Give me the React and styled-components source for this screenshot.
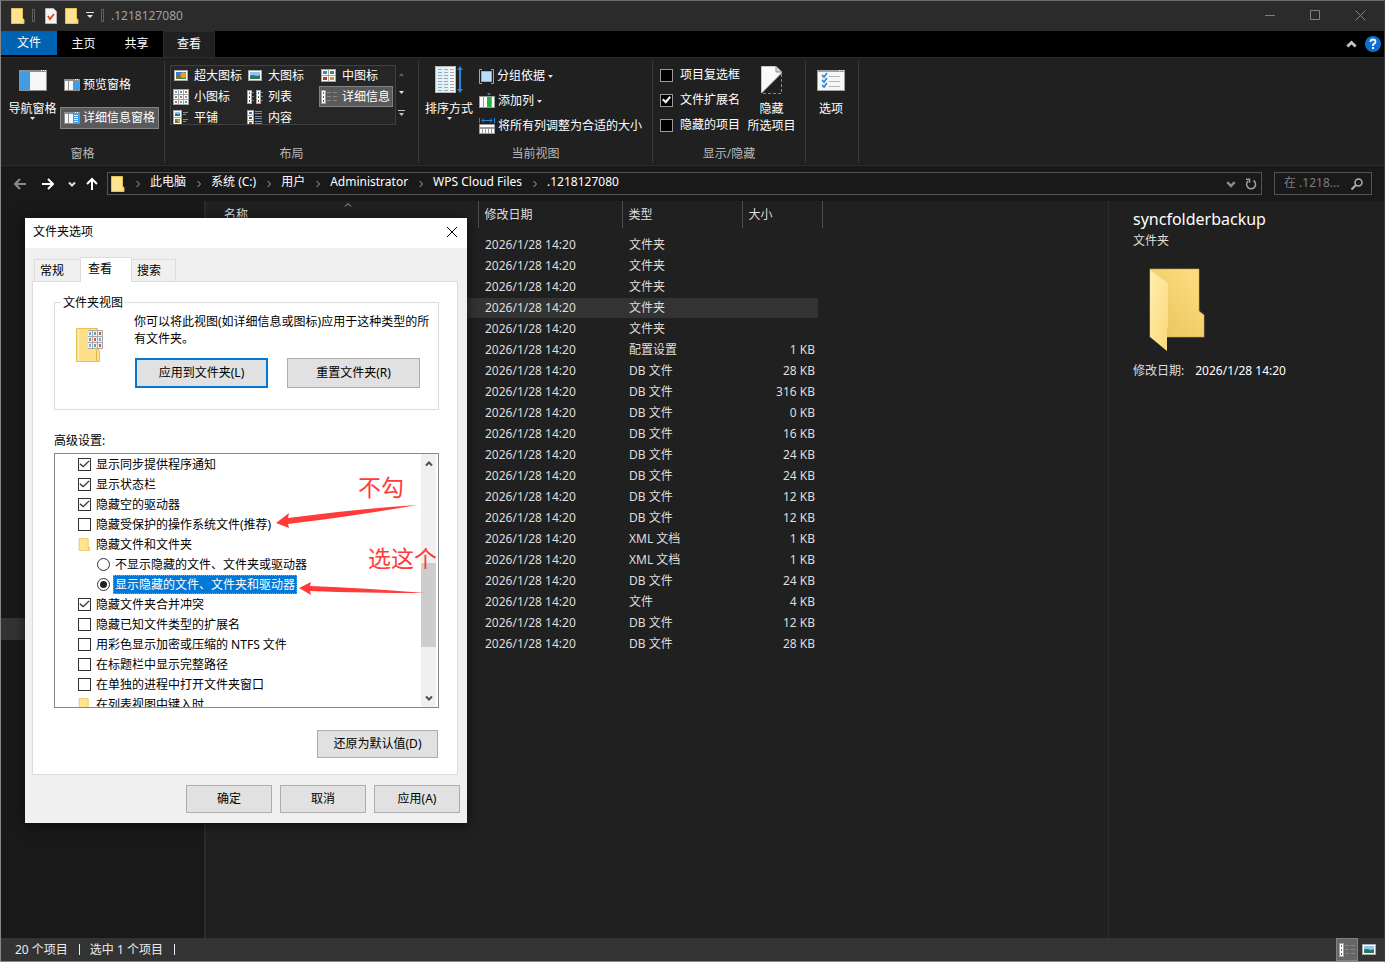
import React from "react";
import styled, { createGlobalStyle, css } from "styled-components";

const Global = createGlobalStyle`
  *, *::before, *::after { box-sizing: border-box; }
  body { margin: 0; background: #202020; }
  body, button, input, table {
    font-family: "Noto Sans", "Noto Sans CJK SC", sans-serif;
    font-size: 12px;
    line-height: 16px;
  }
  button { border: 0; padding: 0; margin: 0; background: none; color: inherit; white-space: nowrap; }
  svg { display: block; flex: none; }
`;

/* ---------- window frame ---------- */
const Window = styled.div`
  position: relative;
  display: flex;
  flex-direction: column;
  min-height: 100vh;
  border: 1px solid #868686;
  border-top-color: #6c6c6c;
  border-right-color: #3c3c3c;
  background: #202020;
  color: #fff;
  overflow: hidden;
`;
const TitleBar = styled.header`
  display: flex;
  align-items: center;
  height: 30px;
  padding-bottom: 1px;
  background: #2b2b2b;
`;
const QuickAccess = styled.div`
  display: flex;
  align-items: center;
  gap: 7px;
  padding-left: 10px;
`;
const Grip = styled.span`
  width: 3px;
  height: 13px;
  border: 1px solid #606060;
`;
const WindowTitle = styled.h1`
  margin: 0;
  font-size: 12px;
  font-weight: 400;
  color: #a0a0a0;
`;
const Controls = styled.div`
  display: flex;
  margin: 0 1px 0 auto;
`;
const ControlButton = styled.button`
  display: grid;
  place-items: center;
  width: 45px;
  height: 29px;
`;
const TabBar = styled.nav`
  display: flex;
  height: 26px;
  background: #000;
`;
const RibbonTab = styled.button`
  width: ${(p) => p.$w || 53}px;
  height: 26px;
  padding-bottom: 1px;
  ${(p) => p.$file && css`
    height: 24px;
    padding: 0;
    background: #0063b1;
  `}
  ${(p) => p.$active && css`background: #202020; border: 1px solid #2b2b2b; border-bottom: 0;`}
`;
const TabTools = styled.div`
  display: flex;
  align-items: center;
  gap: 8px;
  margin-left: auto;
  padding-right: 3px;
`;

/* ---------- ribbon ---------- */
const Ribbon = styled.section`
  display: flex;
  height: 109px;
  padding-top: 3px;
  border-top: 1px solid #2b2b2b;
  border-bottom: 1px solid #2b2b2b;
`;
const Group = styled.div`
  display: flex;
  flex-direction: column;
  width: ${(p) => p.$w}px;
  height: 102px;
  border-right: 1px solid #3a3a3a;
`;
const GroupBody = styled.div`
  display: flex;
  flex: 1;
  padding: 4px 4px 0;
`;
const GroupLabel = styled.div`
  height: 17px;
  text-align: center;
  color: #b8b8b8;
`;
const BigButton = styled.button`
  display: flex;
  flex: none;
  flex-direction: column;
  align-items: center;
  width: ${(p) => p.$w || 52}px;
  height: 78px;
  line-height: 17px;
`;
const BigIcon = styled.span`
  display: grid;
  place-items: center;
  height: 30px;
  margin: 0 0 5px;
`;
const Stack = styled.div`
  display: flex;
  flex-direction: column;
  align-items: flex-start;
  gap: ${(p) => p.$gap}px;
  padding-top: ${(p) => p.$top || 0}px;
  padding-left: ${(p) => p.$left || 0}px;
`;
const SmallButton = styled.button`
  display: flex;
  align-items: center;
  gap: 3px;
  height: ${(p) => p.$h || 22}px;
  padding: 0 3px;
  border: 1px solid ${(p) => (p.$on ? "#828282" : "transparent")};
  background: ${(p) => (p.$on ? "#5a5a5a" : "none")};
`;
const Gallery = styled.div`
  display: grid;
  grid-template-columns: 74px 74px 74px;
  grid-auto-rows: 21px;
  width: 226px;
  height: 60px;
  margin-left: 1px;
  border: 1px solid #404040;
  background: #262626;
  overflow: hidden;
`;
const GalleryItem = styled.button`
  display: flex;
  align-items: center;
  gap: 5px;
  height: 21px;
  margin-top: -1px;
  padding-left: 1px;
  border: 1px solid ${(p) => (p.$on ? "#828282" : "transparent")};
  background: ${(p) => (p.$on ? "#5a5a5a" : "none")};
`;
const GalleryScroll = styled.div`
  display: grid;
  width: 11px;
  height: 60px;
  button { display: grid; place-items: center; }
`;
const RibbonCheck = styled.label`
  display: flex;
  align-items: center;
  gap: 7px;
  height: 16px;
  white-space: nowrap;
`;
const Check = styled.input.attrs({ type: "checkbox" })`
  appearance: none;
  display: grid;
  place-items: center;
  flex: none;
  width: 13px;
  height: 13px;
  margin: 0;
  border: 1px solid ${(p) => (p.$dark ? "#9a9a9a" : "#333")};
  background: ${(p) => (p.$dark ? "#000" : "#fff")};
  &:checked::after {
    content: "";
    width: ${(p) => (p.$dark ? 9 : 11)}px;
    height: ${(p) => (p.$dark ? 9 : 10)}px;
    background: ${(p) => (p.$dark ? "#f0f0f0" : "#333")};
    clip-path: ${(p) => p.$dark
      ? "polygon(0 50%, 16% 34%, 40% 56%, 84% 6%, 100% 22%, 42% 92%)"
      : "polygon(4% 52%, 12% 43%, 38% 68%, 88% 14%, 97% 23%, 38% 86%)"};
  }
`;
const Radio = styled.input.attrs({ type: "radio" })`
  appearance: none;
  display: grid;
  place-items: center;
  flex: none;
  width: 13px;
  height: 13px;
  margin: 0;
  border: 1px solid #333;
  border-radius: 50%;
  &:checked::after {
    content: "";
    width: 7px;
    height: 7px;
    border-radius: 50%;
    background: #222;
  }
`;

/* ---------- address row ---------- */
const AddressRow = styled.div`
  display: flex;
  align-items: center;
  height: 35px;
  padding-right: 12px;
  background: #191919;
`;
const NavButtons = styled.div`
  display: flex;
  align-items: center;
  width: 106px;
  padding-left: 11px;
  button { display: grid; place-items: center; }
`;
const NavButton = styled.button`
  width: ${(p) => p.$w}px;
  height: 22px;
`;
const AddressBox = styled.nav`
  display: flex;
  align-items: center;
  flex: 1;
  height: 23px;
  padding-left: 3px;
  border: 1px solid #535353;
`;
const Crumb = styled.button`
  padding-bottom: 3px;
`;
const Sep = styled.span`
  display: grid;
  place-items: center;
  width: 25px;
`;
const AddressTools = styled.div`
  display: flex;
  align-items: center;
  margin-left: auto;
  button { display: grid; place-items: center; width: 20px; height: 21px; }
`;
const SearchBox = styled.label`
  display: flex;
  align-items: center;
  width: 98px;
  height: 23px;
  margin-left: 12px;
  padding: 0 8px 0 9px;
  border: 1px solid #535353;
`;
const SearchInput = styled.input`
  flex: 1;
  min-width: 0;
  padding: 0 0 2px;
  border: 0;
  background: none;
  color: #fff;
  &::placeholder { color: #7c7c7c; opacity: 1; }
`;

/* ---------- content ---------- */
const Content = styled.main`
  display: flex;
  flex: 1;
`;
const Tree = styled.aside`
  width: 205px;
  padding-top: 417px;
  border-right: 2px solid #2b2b2b;
  background: #191919;
`;
const TreeRow = styled.div`
  height: 22px;
  background: #333;
`;
const Files = styled.section`
  flex: 1;
  min-width: 0;
`;
const Table = styled.table`
  table-layout: fixed;
  width: 616px;
  border-collapse: collapse;
  color: #dedede;
  th, td { padding: 0; font-weight: 400; text-align: left; }
`;
const HeadCell = styled.th`
  height: 27px;
  border-right: 1px solid #4e4e4e;
`;
const HeadInner = styled.button`
  display: grid;
  width: 100%;
  height: 27px;
  padding-left: ${(p) => p.$left || 6}px;
  text-align: left;
  align-items: center;
  > * { grid-area: 1 / 1; }
  svg { align-self: start; justify-self: center; }
`;
const SortMark = styled.span`
  justify-self: center;
  align-self: start;
  padding-right: 6px;
`;
const Row = styled.tr`
  height: 21px;
  background: linear-gradient(${(p) => (p.$on ? "#333, #333" : "transparent, transparent")}) 0 1px / 612px 20px no-repeat;
`;
const Cell = styled.td`
  && { padding-left: 7px; }
  && { ${(p) => p.$right && css`text-align: right; padding-right: 7px;`} }
`;
const Details = styled.aside`
  width: 276px;
  padding: 6px 0 0 24px;
  border-left: 1px solid #2e2e2e;
`;
const DetailsTitle = styled.h2`
  margin: 0;
  font-size: 16px;
  font-weight: 400;
  line-height: 24px;
`;
const DetailsType = styled.p`
  margin: 2px 0 19px;
  color: #dedede;
`;
const DetailsMeta = styled.p`
  display: flex;
  gap: 11px;
  margin: 11px 0 0;
  span { color: #dedede; }
`;
const StatusBar = styled.footer`
  display: flex;
  align-items: center;
  height: 23px;
  padding-left: 14px;
  background: #333;
  color: #ececec;
`;
const StatusDivider = styled.span`
  width: 1px;
  height: 11px;
  margin: 0 10px 0 11px;
  background: #ececec;
`;
const ViewSwitch = styled.div`
  display: flex;
  margin-left: auto;
  margin-right: 4px;
`;
const ViewButton = styled.button`
  display: grid;
  place-items: center;
  width: 22px;
  height: 23px;
  border: 1px solid ${(p) => (p.$on ? "#828282" : "transparent")};
  background: ${(p) => (p.$on ? "#666" : "none")};
`;

/* ---------- dialog ---------- */
const Dialog = styled.section`
  position: absolute;
  left: 24px;
  top: 217px;
  width: 442px;
  background: #f0f0f0;
  color: #000;
  box-shadow: 0 2px 12px rgba(0, 0, 0, 0.6);
`;
const DialogTitle = styled.header`
  display: flex;
  align-items: center;
  justify-content: space-between;
  height: 30px;
  padding: 0 9px 2px 8px;
  background: #fff;
`;
const DialogTabs = styled.div`
  display: flex;
  align-items: flex-end;
  height: 33px;
  padding-left: 9px;
`;
const DialogTab = styled.button`
  width: ${(p) => p.$w}px;
  height: 22px;
  padding-left: 5px;
  border: 1px solid #dcdcdc;
  border-bottom: 0;
  text-align: left;
  ${(p) => p.$on && css`
    position: relative;
    height: 25px;
    margin: 0 -1px -1px;
    padding: 0 0 3px 7px;
    background: #fff;
  `}
`;
const Panel = styled.div`
  display: flex;
  flex-direction: column;
  margin: 0 9px 0 7px;
  padding: 12px 18px 16px 21px;
  border: 1px solid #dcdcdc;
  background: #fff;
`;
const Fieldset = styled.fieldset`
  height: 116px;
  margin: 0;
  padding: 0;
  border: 1px solid #dcdcdc;
  legend { height: 16px; margin-left: 6px; padding: 1px 2px 0; }
`;
const FieldBody = styled.div`
  display: flex;
  padding-top: 3px;
  > svg { margin: 14px 30px 0 21px; }
`;
const FieldText = styled.p`
  margin: 0 0 11px;
  line-height: 17px;
`;
const Buttons = styled.div`
  display: flex;
  gap: ${(p) => p.$gap}px;
  padding-left: 1px;
  ${(p) => p.$footer && css`justify-content: flex-end; padding: 10px 7px;`}
`;
const PushButton = styled.button`
  width: ${(p) => p.$w || 86}px;
  height: ${(p) => p.$h || 28}px;
  border: ${(p) => (p.$primary ? "2px solid #0078d7" : "1px solid #adadad")};
  background: #e1e1e1;
`;
const ListLabel = styled.div`
  margin: 23px 0 4px;
`;
const ListBox = styled.div`
  display: flex;
  height: 255px;
  padding-right: 2px;
  border: 1px solid #828790;
`;
const Options = styled.div`
  flex: 1;
  overflow: hidden;
  padding-left: 23px;
`;
const Option = styled.label`
  display: flex;
  align-items: center;
  gap: ${(p) => (p.$nested ? 3 : 5)}px;
  height: 20px;
  padding-left: ${(p) => (p.$nested ? 19 : 0)}px;
  white-space: nowrap;
`;
const OptionText = styled.span`
  padding: 2px 2px 1px;
  margin-left: ${(p) => (p.$nested ? 0 : -2)}px;
  ${(p) => p.$on && css`
    background: #0078d7;
    color: #fff;
    outline: 1px dotted #ff8728;
    outline-offset: -1px;
  `}
`;
const ScrollBar = styled.div`
  display: flex;
  flex-direction: column;
  align-items: center;
  width: 15px;
  padding: 6px 0 5px;
  background: #f0f0f0;
`;
const Thumb = styled.div`
  width: 15px;
  height: 84px;
  margin: 95px 0 auto;
  background: #cdcdcd;
`;
const Restore = styled(PushButton)`
  align-self: flex-end;
  margin: 22px 1px 0 0;
`;
const Note = styled.span`
  position: absolute;
  left: ${(p) => p.$x}px;
  top: ${(p) => p.$y}px;
  font-size: 23px;
  line-height: 28px;
  color: #ff3b3b;
  white-space: nowrap;
`;
const Arrows = styled.svg`
  position: absolute;
  left: 250px;
  top: 282px;
  pointer-events: none;
`;

/* ---------- drawings ---------- */
const Folder = ({ w = 14, h = 16 }) => (
  <svg width={w} height={h} viewBox="0 0 14 16">
    <path d="M.5.5h11v10l1.500 1v4H.5z" fill="#ffe391" stroke="#e9c04c" />
    <path d="M11.500 10.500v5h1.500v-4.500z" fill="#f5cf5f" />
  </svg>
);
const Chevron = ({ d = "right", c = "#8a8a8a", s = 8, w = 2 }) => {
  const paths = { right: "M2.500 1l3 3-3 3", down: "M1 2.500l3 3 3-3", up: "M1 5.500l3-3 3 3" };
  return (
    <svg width={s} height={s} viewBox="0 0 8 8" fill="none" stroke={c} strokeWidth={w}>
      <path d={paths[d]} />
    </svg>
  );
};
const Tri = ({ up, c = "#e0e0e0" }) => (
  <svg width="5" height="3" viewBox="0 0 5 3"><path d={up ? "M0 3L2.500 0 5 3z" : "M0 0h5L2.500 3z"} fill={c} /></svg>
);
const NavPaneIcon = () => (
  <svg width="28" height="21" viewBox="0 0 28 21">
    <rect width="28" height="21" fill="#8e8e8e" />
    <path d="M1 2h10v18H1z" fill="#429ce3" />
    <path d="M11 2h16v18H11z" fill="#f7f7f7" />
    <path d="M22 .5h1M24 .5h1M26 .5h1" stroke="#fff" />
  </svg>
);
const SmallPaneIcon = ({ lines }) => (
  <svg width="16" height="12" viewBox="0 0 16 12">
    <rect width="16" height="12" fill="#8e8e8e" />
    <path d="M1 2h3v9H1zM5 2h4v9H5z" fill="#f7f7f7" />
    <path d="M9 2h6v9H9z" fill="#429ce3" />
    {lines && <path d="M10 3.500h4M10 5.500h4M10 7.500h4M10 9.500h4" stroke="#d9edff" />}
    <path d="M11 .5h1M13 .5h1" stroke="#fff" />
  </svg>
);
const Photo = ({ x = 0, y = 0, w = 10, h = 6, warm }) => (
  <g transform={`translate(${x} ${y})`}>
    <rect width={w} height={h} fill={warm ? "#3b78d8" : "#8cc4f5"} />
    <path d={`M0 ${h * 0.5}q${w * 0.3}-1 ${w * 0.5} 0t${w * 0.5}-.5V${h}H0z`} fill={warm ? "#3f9040" : "#2f7360"} />
    {warm && <circle cx={w * 0.72} cy={h * 0.45} r={h * 0.4} fill="#e7a11a" />}
    {warm && <circle cx={w * 0.28} cy={h * 0.7} r={h * 0.25} fill="#d8452c" />}
  </g>
);
const ViewIcon = ({ kind }) => {
  const cols = ["#2d7ad1", "#1f7a4f", "#c4302b"];
  return (
    <svg width="16" height="16" viewBox="0 0 16 16">
      {(kind === "xl" || kind === "large") && (
        <g><rect x="1" y="2" width="14" height="11" fill="#a8a8a8" /><rect x="2" y="3" width="12" height="9" fill="#fff" /><Photo x={3} y={4} w={10} h={7} warm={kind === "xl"} /></g>
      )}
      {kind === "medium" && (
        <g><rect y="1" width="15" height="13" fill="#a4a4a4" />
          {[[1, 2], [8, 2], [1, 8], [8, 8]].map(([x, y], i) => (
            <g key={i}><rect x={x} y={y} width="6" height="5" fill="#fff" /><rect x={x + 1} y={y + 1} width="4" height="3" fill={["#3c86c8", "#3f8f62", "#c9302c", "#d99722"][i]} /></g>
          ))}</g>
      )}
      {kind === "small" && (
        <g><rect width="16" height="16" fill="#a4a4a4" />{[0, 1, 2].map((r) => [0, 1, 2].map((c) => (
          <g key={`${r}${c}`}><rect x={c * 5 + 1} y={r * 5 + 1} width="4" height="4" fill="#fff" /><rect x={c * 5 + 2} y={r * 5 + 2} width="2" height="2" fill={cols[(r + c) % 3]} fillOpacity=".75" /></g>
        )))}</g>
      )}
      {kind === "list" && (
        <g>{[0, 9].map((x) => (
          <g key={x}><rect x={x} y="1" width="5" height="14" fill="#a4a4a4" />{[2, 6, 10].map((y, i) => (
            <g key={y}><rect x={x + 1} y={y} width="3" height="4" fill="#fff" /><rect x={x + 2} y={y + 1} width="1" height="2" fill={cols[i]} /><path d={`M${x + 5} ${y + 1}.5h2`} stroke="#777" /></g>
          ))}</g>
        ))}</g>
      )}
      {kind === "details" && (
        <g><rect y="1" width="5" height="14" fill="#a4a4a4" />{[2, 6, 10].map((y, i) => (
          <g key={y}><rect x="1" y={y} width="3" height="4" fill="#fff" /><rect x="2" y={y + 1} width="1" height="2" fill={cols[i]} /><path d={`M6 ${y + 1}.5h4M12 ${y + 1}.5h4`} stroke="#858585" /></g>
        ))}</g>
      )}
      {kind === "tiles" && (
        <g>{[0, 7].map((y) => (
          <g key={y}><rect y={y} width="9" height="8" fill="#a4a4a4" /><rect x="1" y={y + 1} width="7" height="6" fill="#fff" /><Photo x={2} y={y + 2} w={5} h={4} warm={y > 0} /><path d={`M10 ${y + 2}.5h5M10 ${y + 4}.5h3`} stroke="#8a8a8a" /></g>
        ))}</g>
      )}
      {kind === "content" && (
        <g><rect width="7" height="16" fill="#a4a4a4" />{[1, 6, 11].map((y, i) => (
          <g key={y}><rect x="1" y={y} width="5" height="4" fill="#fff" /><rect x="2" y={y + 1} width="3" height="2" fill={cols[i]} /><path d={`M8 ${y}.5h7`} stroke="#8a8a8a" /><path d={`M8 ${y + 2}.5h7`} stroke="#5b93e8" /></g>
        ))}</g>
      )}
    </svg>
  );
};
const SortIcon = () => (
  <svg width="28" height="28" viewBox="0 0 28 28">
    <rect width="21" height="27" fill="#b9b9b9" />
    <rect x="1" y="1" width="19" height="25" fill="#f7f7f7" />
    <path d="M1 1h13v25H1z" fill="#dff1fb" />
    <path d="M3 3.500h16M3 6.500h16M3 9.500h16M3 12.500h16M3 15.500h16M3 18.500h16M3 21.500h16M3 24.500h16" stroke="#a2abb0" strokeDasharray="4 2" />
    <path d="M25 3v21" stroke="#2a86d2" strokeWidth="2" />
    <path d="M22 4l3-4 3 4zM22 23l3 4 3-4z" fill="#2a86d2" />
  </svg>
);
const GroupByIcon = () => (
  <svg width="15" height="15" viewBox="0 0 15 15">
    <path d="M3 .5H.5v14H3M12 .5h2.500v14H12" fill="none" stroke="#a8a8a8" />
    <rect x="2.500" y="2.500" width="10" height="10" fill="#b5dffb" stroke="#6fb9ea" />
  </svg>
);
const AddColumnIcon = () => (
  <svg width="16" height="16" viewBox="0 0 16 16">
    <path d="M8 0h4L10 2.500z" fill="#2a86d2" />
    <rect y="3" width="16" height="12" fill="#989898" />
    <path d="M1 4h3v10H1zM5 4h3v10H5zM13 4h2v10h-2z" fill="#fff" />
    <path d="M8 4h4v10H8z" fill="#24b43c" />
  </svg>
);
const FitIcon = () => (
  <svg width="16" height="16" viewBox="0 0 16 16">
    <path d="M.5 0v5M15.500 0v5M3 2.500h10M5 .5L3 2.500l2 2M11 .5l2 2-2 2" fill="none" stroke="#2a86d2" />
    <path d="M0 6h16v10H0z" fill="#9c9c9c" />
    <path d="M1 7h14v2H1zM1 11h2v4H1zM4 11h2v4H4zM7 11h2v4H7zM10 11h2v4h-2zM13 11h2v4h-2z" fill="#fff" />
  </svg>
);
const HideIcon = () => (
  <svg width="22" height="28" viewBox="0 0 22 28">
    <path d="M.5.500H15L20.500 6v1L.5 27z" fill="#fafafa" stroke="#c8c8c8" />
    <path d="M15 .5V6h5.500" fill="#d8d8d8" stroke="#8c8c8c" />
    <path d="M20.500 8v19.500H1" fill="none" stroke="#429ce3" strokeDasharray="3 2" />
  </svg>
);
const OptionsIcon = () => (
  <svg width="28" height="21" viewBox="0 0 28 21">
    <rect width="28" height="21" fill="#a0a0a0" />
    <path d="M1 2h26v18H1z" fill="#f7f7f7" />
    <path d="M22 .5h1M24 .5h1M26 .5h1" stroke="#fff" />
    {[5, 10, 15].map((y) => (
      <g key={y}><rect x="5" y={y - 1} width="4" height="4" fill="#d4e9f8" /><path d={`M5 ${y}l2 2 3-4`} fill="none" stroke="#2a86d2" strokeWidth="1.500" /><path d={`M12 ${y + 1}.5h11`} stroke="#b4b4b4" /></g>
    ))}
  </svg>
);
const BigFolder = () => (
  <svg width="88" height="84" viewBox="0 0 88 84">
    <defs>
      <linearGradient id="back" x1="0" y1="1" x2="1" y2="0"><stop offset="0" stopColor="#e8c15a" /><stop offset="1" stopColor="#ffe083" /></linearGradient>
      <linearGradient id="flap" x1="0" y1="0" x2="1" y2="1"><stop offset="0" stopColor="#ffedb0" /><stop offset="1" stopColor="#fbd978" /></linearGradient>
    </defs>
    <path d="M17 1h49v42l5 4v22H17z" fill="url(#back)" stroke="#c9a850" strokeWidth=".6" />
    <path d="M17 2l18 13v43l-1 3v22L17 69z" fill="url(#flap)" />
  </svg>
);
const ViewFolder = () => (
  <svg width="28" height="36" viewBox="0 0 28 36">
    <path d="M.5 1.500h21v20l2 2v11H.5z" fill="#ffe08a" stroke="#e9c04c" />
    <path d="M2.500 2v32" stroke="#fff0bc" />
    <path d="M20.500 34V23l1.500-1" stroke="#e0b540" fill="none" />
    <rect x="12" y="3" width="15" height="19" fill="#a8a8a8" />
    {[0, 1, 2].map((r) => [0, 1, 2].map((c) => (
      <g key={`${r}${c}`}><rect x={c * 5 + 12} y={r * 6 + 4} width="4" height="5" fill="#f2f2f2" /><rect x={c * 5 + 13} y={r * 6 + 5} width="2" height="3" fill={["#5b93c8", "#4e8a7a", "#c4302b"][(c + (r === 1 ? 1 : 0)) % 3]} fillOpacity=".8" /></g>
    )))}
  </svg>
);
const Arrow = ({ d }) => (
  <svg width="14" height="14" viewBox="0 0 14 14" fill="none" stroke={d === "back" ? "#8a8a8a" : "#fff"} strokeWidth="2">
    <path d={d === "up" ? "M7 13V2M2 7l5-5 5 5" : d === "back" ? "M13 7H2M7 2L2 7l5 5" : "M1 7h11M7 2l5 5-5 5"} />
  </svg>
);

/* ---------- data ---------- */
const views = [
  ["xl", "超大图标"], ["large", "大图标"], ["medium", "中图标"],
  ["small", "小图标"], ["list", "列表"], ["details", "详细信息"],
  ["tiles", "平铺"], ["content", "内容"],
];
const files = [
  ...Array(5).fill(["文件夹", ""]),
  ["配置设置", "1 KB"],
  ["DB 文件", "28 KB"], ["DB 文件", "316 KB"], ["DB 文件", "0 KB"], ["DB 文件", "16 KB"],
  ["DB 文件", "24 KB"], ["DB 文件", "24 KB"], ["DB 文件", "12 KB"], ["DB 文件", "12 KB"],
  ["XML 文档", "1 KB"], ["XML 文档", "1 KB"], ["DB 文件", "24 KB"], ["文件", "4 KB"],
  ["DB 文件", "12 KB"], ["DB 文件", "28 KB"],
];
const options = [
  { t: "显示同步提供程序通知", on: true },
  { t: "显示状态栏", on: true },
  { t: "隐藏空的驱动器", on: true },
  { t: "隐藏受保护的操作系统文件(推荐)" },
  { t: "隐藏文件和文件夹", kind: "folder" },
  { t: "不显示隐藏的文件、文件夹或驱动器", kind: "radio" },
  { t: "显示隐藏的文件、文件夹和驱动器", kind: "radio", on: true },
  { t: "隐藏文件夹合并冲突", on: true },
  { t: "隐藏已知文件类型的扩展名" },
  { t: "用彩色显示加密或压缩的 NTFS 文件" },
  { t: "在标题栏中显示完整路径" },
  { t: "在单独的进程中打开文件夹窗口" },
  { t: "在列表视图中键入时", kind: "folder" },
];
const crumbs = ["此电脑", "系统 (C:)", "用户", "Administrator", "WPS Cloud Files", ".1218127080"];

function OptionRow({ t, on, kind }) {
  const nested = kind === "radio";
  return (
    <Option as={kind === "folder" ? "div" : "label"} $nested={nested}>
      {kind === "folder" ? <Folder w={13} h={13} /> : nested ? <Radio name="hidden-files" defaultChecked={on} /> : <Check defaultChecked={on} />}
      <OptionText $nested={nested} $on={nested && on}>{t}</OptionText>
    </Option>
  );
}

function FolderOptions() {
  return (
    <Dialog role="dialog" aria-label="文件夹选项">
      <DialogTitle>
        文件夹选项
        <button aria-label="关闭">
          <svg width="12" height="12" viewBox="0 0 12 12" stroke="#000"><path d="M1 1l10 10M11 1L1 11" /></svg>
        </button>
      </DialogTitle>
      <DialogTabs role="tablist">
        <DialogTab role="tab" $w={47}>常规</DialogTab>
        <DialogTab role="tab" aria-selected="true" $w={52} $on>查看</DialogTab>
        <DialogTab role="tab" $w={45}>搜索</DialogTab>
      </DialogTabs>
      <Panel>
        <Fieldset>
          <legend>文件夹视图</legend>
          <FieldBody>
            <ViewFolder />
            <div>
              <FieldText>你可以将此视图(如详细信息或图标)应用于这种类型的所有文件夹。</FieldText>
              <Buttons $gap={19}>
                <PushButton $w={133} $h={30} $primary>应用到文件夹(L)</PushButton>
                <PushButton $w={133} $h={30}>重置文件夹(R)</PushButton>
              </Buttons>
            </div>
          </FieldBody>
        </Fieldset>
        <ListLabel>高级设置:</ListLabel>
        <ListBox>
          <Options>{options.map((o) => <OptionRow key={o.t} {...o} />)}</Options>
          <ScrollBar>
            <Chevron d="up" c="#505050" />
            <Thumb />
            <Chevron d="down" c="#505050" />
          </ScrollBar>
        </ListBox>
        <Restore $w={121}>还原为默认值(D)</Restore>
      </Panel>
      <Buttons $gap={8} $footer>
        <PushButton>确定</PushButton>
        <PushButton>取消</PushButton>
        <PushButton>应用(A)</PushButton>
      </Buttons>
      <Note $x={333} $y={255}>不勾</Note>
      <Note $x={343} $y={326}>选这个</Note>
      <Arrows width="152" height="98" viewBox="0 0 152 98" fill="#ff3b3b">
        <path d="M1 23L14 13 13 18Q80 9 142 5Q80 16 13 24L14 28z" />
        <path d="M24 88L36 82 35 86Q90 88 150 93Q90 93 35 91L36 95z" />
      </Arrows>
    </Dialog>
  );
}

export default function App() {
  return (
    <Window>
      <Global />
      <TitleBar>
        <QuickAccess>
          <Folder /><Grip />
          <svg width="16" height="16" viewBox="0 0 16 16">
            <path d="M3.500.500h8l3 3v12h-11z" fill="#f4f4f4" stroke="#b8b8b8" />
            <path d="M6 8l2 3 4-5" fill="none" stroke="#e2501e" strokeWidth="2" />
          </svg>
          <Folder />
          <svg width="8" height="7" viewBox="0 0 8 7"><path d="M0 0h8v1H0zM1 3h6L4 6z" fill="#e6e6e6" /></svg>
          <Grip />
          <WindowTitle>.1218127080</WindowTitle>
        </QuickAccess>
        <Controls>
          <ControlButton aria-label="最小化"><svg width="11" height="11" stroke="#808080"><path d="M0 5.500h10" /></svg></ControlButton>
          <ControlButton aria-label="最大化"><svg width="11" height="11" stroke="#808080" fill="none"><path d="M.5.500h9v9h-9z" /></svg></ControlButton>
          <ControlButton aria-label="关闭"><svg width="11" height="11" stroke="#808080"><path d="M.5.500l10 10M10.500.500l-10 10" /></svg></ControlButton>
        </Controls>
      </TitleBar>
      <TabBar>
        <RibbonTab $w={56} $file>文件</RibbonTab>
        <RibbonTab>主页</RibbonTab>
        <RibbonTab>共享</RibbonTab>
        <RibbonTab $w={52} $active>查看</RibbonTab>
        <TabTools>
          <button aria-label="折叠功能区"><Chevron d="up" c="#c4c4c4" s={11} /></button>
          <button aria-label="帮助">
            <svg width="16" height="16" viewBox="0 0 16 16">
              <circle cx="8" cy="8" r="8" fill="#0c6fd1" />
              <path d="M5.500 6q0-2.500 2.500-2.500T10.500 6Q10.500 7.200 8 8.500V10" fill="none" stroke="#fff" strokeWidth="1.800" />
              <rect x="7" y="11" width="2" height="2" fill="#fff" />
            </svg>
          </button>
        </TabTools>
      </TabBar>
      <Ribbon>
        <Group $w={164}>
          <GroupBody>
            <BigButton $w={55}><BigIcon><NavPaneIcon /></BigIcon>导航窗格<Tri /></BigButton>
            <Stack $gap={11} $top={9}>
              <SmallButton><SmallPaneIcon />预览窗格</SmallButton>
              <SmallButton $on><SmallPaneIcon lines />详细信息窗格</SmallButton>
            </Stack>
          </GroupBody>
          <GroupLabel>窗格</GroupLabel>
        </Group>
        <Group $w={254}>
          <GroupBody>
            <Gallery>
              {views.map(([k, t]) => (
                <GalleryItem key={k} $on={k === "details"}><ViewIcon kind={k} />{t}</GalleryItem>
              ))}
            </Gallery>
            <GalleryScroll>
              <button aria-label="上"><Tri up c="#5e5e5e" /></button>
              <button aria-label="下"><Tri /></button>
              <button aria-label="更多"><svg width="7" height="7"><path d="M0 0h7v1H0zM1 3h5L3.500 6z" fill="#c8c8c8" /></svg></button>
            </GalleryScroll>
          </GroupBody>
          <GroupLabel>布局</GroupLabel>
        </Group>
        <Group $w={234}>
          <GroupBody>
            <BigButton><BigIcon><SortIcon /></BigIcon>排序方式<Tri /></BigButton>
            <Stack $gap={3}>
              <SmallButton><GroupByIcon />分组依据<Tri /></SmallButton>
              <SmallButton><AddColumnIcon />添加列<Tri /></SmallButton>
              <SmallButton><FitIcon />将所有列调整为合适的大小</SmallButton>
            </Stack>
          </GroupBody>
          <GroupLabel>当前视图</GroupLabel>
        </Group>
        <Group $w={153}>
          <GroupBody>
            <Stack $gap={9} $top={2} $left={3}>
              <RibbonCheck><Check $dark />项目复选框</RibbonCheck>
              <RibbonCheck><Check $dark defaultChecked />文件扩展名</RibbonCheck>
              <RibbonCheck><Check $dark />隐藏的项目</RibbonCheck>
            </Stack>
            <BigButton $w={63}><BigIcon><HideIcon /></BigIcon>隐藏<br />所选项目</BigButton>
          </GroupBody>
          <GroupLabel>显示/隐藏</GroupLabel>
        </Group>
        <Group $w={53}>
          <GroupBody>
            <BigButton $w={42}><BigIcon><OptionsIcon /></BigIcon>选项</BigButton>
          </GroupBody>
        </Group>
      </Ribbon>
      <AddressRow>
        <NavButtons>
          <NavButton $w={16} aria-label="后退"><Arrow d="back" /></NavButton>
          <NavButton $w={42} aria-label="前进"><Arrow d="forward" /></NavButton>
          <NavButton $w={8} aria-label="最近"><Chevron d="down" c="#e0e0e0" /></NavButton>
          <NavButton $w={32} aria-label="向上"><Arrow d="up" /></NavButton>
        </NavButtons>
        <AddressBox>
          <Folder />
          {crumbs.map((c) => (
            <React.Fragment key={c}><Sep><Chevron w={1} c="#a8a8a8" /></Sep><Crumb>{c}</Crumb></React.Fragment>
          ))}
          <AddressTools>
            <button aria-label="展开"><Chevron d="down" s={10} /></button>
            <button aria-label="刷新">
              <svg width="12" height="12" viewBox="0 0 12 12" fill="none" stroke="#a0a0a0" strokeWidth="1.500"><path d="M8.500 2.500A4.500 4.500 0 1 1 3 3M1 1.200h3.500v3.500" /></svg>
            </button>
          </AddressTools>
        </AddressBox>
        <SearchBox>
          <SearchInput aria-label="搜索" placeholder="在 .1218..." />
          <svg width="12" height="12" viewBox="0 0 12 12" fill="none" stroke="#b0b0b0"><circle cx="7.500" cy="4.500" r="3.500" strokeWidth="1.500" /><path d="M5 7l-4.500 4.500" strokeWidth="2" /></svg>
        </SearchBox>
      </AddressRow>
      <Content>
        <Tree><TreeRow /></Tree>
        <Files>
          <Table>
            <colgroup><col style={{ width: 272 }} /><col style={{ width: 144 }} /><col style={{ width: 120 }} /><col style={{ width: 80 }} /></colgroup>
            <thead>
              <tr>
                <HeadCell>
                  <HeadInner $left={18}>
                    <span>名称</span>
                    <SortMark><Chevron d="up" w={1} c="#b0b0b0" /></SortMark>
                  </HeadInner>
                </HeadCell>
                {["修改日期", "类型", "大小"].map((h) => <HeadCell key={h}><HeadInner><span>{h}</span></HeadInner></HeadCell>)}
              </tr>
              <tr aria-hidden="true"><td colSpan={4} height="6" /></tr>
            </thead>
            <tbody>
              {files.map(([type, size], i) => (
                <Row key={i} $on={i === 3}>
                  <Cell /><Cell>2026/1/28 14:20</Cell><Cell>{type}</Cell><Cell $right>{size}</Cell>
                </Row>
              ))}
            </tbody>
          </Table>
        </Files>
        <Details>
          <DetailsTitle>syncfolderbackup</DetailsTitle>
          <DetailsType>文件夹</DetailsType>
          <BigFolder />
          <DetailsMeta><span>修改日期:</span>2026/1/28 14:20</DetailsMeta>
        </Details>
      </Content>
      <StatusBar>
        20 个项目<StatusDivider />选中 1 个项目<StatusDivider />
        <ViewSwitch>
          <ViewButton $on aria-label="详细信息"><ViewIcon kind="details" /></ViewButton>
          <ViewButton aria-label="大图标"><ViewIcon kind="large" /></ViewButton>
        </ViewSwitch>
      </StatusBar>
      <FolderOptions />
    </Window>
  );
}
